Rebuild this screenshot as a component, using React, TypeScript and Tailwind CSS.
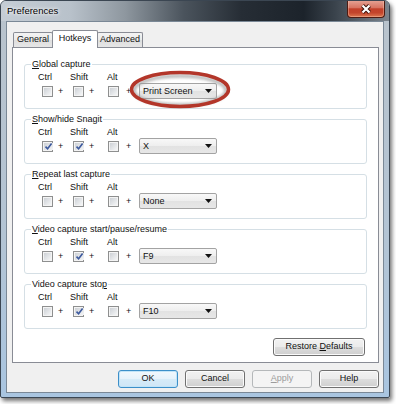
import React from 'react';

type Hotkey = {
  title: React.ReactNode;
  ctrl: boolean;
  shift: boolean;
  alt: boolean;
  key: string;
};

const hotkeys: Hotkey[] = [
  { title: <><u>G</u>lobal capture</>, ctrl: false, shift: false, alt: false, key: 'Print Screen' },
  { title: <><u>S</u>how/hide Snagit</>, ctrl: true, shift: true, alt: false, key: 'X' },
  { title: <><u>R</u>epeat last capture</>, ctrl: false, shift: false, alt: false, key: 'None' },
  { title: <><u>V</u>ideo capture start/pause/resume</>, ctrl: false, shift: true, alt: false, key: 'F9' },
  { title: <>Video capture sto<u>p</u></>, ctrl: false, shift: true, alt: false, key: 'F10' },
];

function Check({ checked }: { checked: boolean }) {
  return (
    <span className="flex w-[11px] h-[11px] shrink-0 border border-[#8e8f8f] bg-[#f4f4f4] p-[1px]">
      <span className="flex-1 flex items-center justify-center bg-[linear-gradient(135deg,#cdd1d6,#f5f6f7)]">
        {checked && (
          <svg width="9" height="9" viewBox="0 0 9 9">
            <path d="M1.5 4.6 L3.6 6.8 L7.6 1.6" fill="none" stroke="#3d5a9e" strokeWidth="1.6" />
          </svg>
        )}
      </span>
    </span>
  );
}

function Combo({ value }: { value: string }) {
  return (
    <div className="flex items-center w-[78px] h-[16px] pl-[3px] pr-[4px] border border-[#a3a3a3] rounded-[2px] bg-[linear-gradient(#f8f8f8,#eeeeee_50%,#e2e2e2_51%,#e7e7e7)]">
      <span className="flex-1 leading-[11px]">{value}</span>
      <svg width="7" height="4" viewBox="0 0 7 4">
        <path d="M0 0 H7 L3.5 4 Z" fill="#111" />
      </svg>
    </div>
  );
}

function Group({ item, highlight }: { item: Hotkey; highlight?: boolean }) {
  return (
    <div className="relative h-[45px] border border-[#d5dfe5] rounded-[3px]">
      <span className="absolute -top-[6px] left-[6px] bg-white px-[1px] leading-[11px]">{item.title}</span>
      <div className="flex pl-[13px] pt-[7px] leading-[11px]">
        <span className="w-[32px]">Ctrl</span>
        <span className="w-[37px]">Shift</span>
        <span>Alt</span>
      </div>
      <div className="flex items-center h-[16px] pl-[17px] leading-[11px]">
        <Check checked={item.ctrl} />
        <span className="ml-[5px] w-[15px]">+</span>
        <Check checked={item.shift} />
        <span className="ml-[5px] w-[19px]">+</span>
        <Check checked={item.alt} />
        <span className="ml-[7px] w-[13px]">+</span>
        <Combo value={item.key} />
      </div>
      {highlight && (
        <svg className="absolute left-[103px] top-[5px] pointer-events-none" width="104" height="40" viewBox="0 0 104 40">
          <defs>
            <filter id="blur" x="-10%" y="-30%" width="120%" height="160%">
              <feGaussianBlur stdDeviation="1.6" />
            </filter>
          </defs>
          <ellipse cx="52" cy="20.5" rx="46" ry="14.5" fill="none" stroke="#9a9a9a" strokeWidth="3" filter="url(#blur)" opacity="0.8" />
          <ellipse cx="52" cy="19.5" rx="48.5" ry="17" fill="none" stroke="#b3362a" strokeWidth="3.5" />
        </svg>
      )}
    </div>
  );
}

function Button({ children, kind = 'normal', width = 'w-[60px]' }: { children: React.ReactNode; kind?: 'normal' | 'default' | 'disabled'; width?: string }) {
  const look =
    kind === 'default'
      ? 'border-[#3c8fc9] bg-[linear-gradient(#f1f8fd,#e6f2fb_50%,#d6ebf8_51%,#cfe6f6)] shadow-[inset_0_0_0_1px_#c2e4f8]'
      : kind === 'disabled'
        ? 'border-[#b5b8ba] bg-[#f4f4f4] text-[#9c9c9c]'
        : 'border-[#707070] bg-[linear-gradient(#f2f2f2,#ebebeb_50%,#dddddd_51%,#cfcfcf)] shadow-[inset_0_0_0_1px_#fbfbfb]';
  return (
    <div className={`flex items-center justify-center h-[18px] ${width} border rounded-[3px] ${look}`}>
      {children}
    </div>
  );
}

export default function App() {
  return (
    <div className="w-[396px] h-[404px] bg-white font-['Liberation_Sans',Arial,sans-serif] text-[9px] text-[#111111]">
      <div className="flex flex-col w-[390px] h-[398px] border border-[#3b4652] rounded-t-[6px] rounded-b-[2px] overflow-hidden bg-[linear-gradient(180deg,#b9c3cc,#b3c4d4_60%,#a9c5e0)] shadow-[2px_3px_4px_rgba(0,0,0,0.55)]">
        {/* title bar */}
        <div className="flex items-start h-[20px] shrink-0 bg-[linear-gradient(90deg,#c5cdd5_0%,#b8c1ca_18%,#8e979f_32%,#4b545d_47%,#262d35_62%,#1c232b_78%,#3a434c_86%,#7c858e_100%)]">
          <span className="pl-[6px] pt-[4px] text-[9.5px] leading-[12px] text-black [text-shadow:0_0_5px_#ffffff,0_0_3px_#ffffff]">Preferences</span>
          <div className="ml-auto mr-[4px] -mt-[1px] flex items-center justify-center w-[38px] h-[18px] border border-[#4e1b12] border-t-0 rounded-b-[4px] bg-[linear-gradient(#e6a698,#d77462_45%,#c2402a_52%,#c3452c_75%,#dd7650)] shadow-[inset_0_0_0_1px_rgba(255,220,200,0.35)]">
            <svg width="12" height="10" viewBox="0 0 12 10">
              <path d="M2.5 1.5 L9.5 8.5 M9.5 1.5 L2.5 8.5" stroke="#3a1008" strokeWidth="4" />
              <path d="M2.5 1.5 L9.5 8.5 M9.5 1.5 L2.5 8.5" stroke="#ffffff" strokeWidth="2.2" />
            </svg>
          </div>
        </div>

        {/* client area */}
        <div className="mx-[5px] h-[372px] flex flex-col border border-[#7a8896] bg-[#f0f0f0] pl-[5px] pr-[4px]">
          <div className="flex items-end pt-[8px] pl-[1px]">
            <div className="flex items-center justify-center w-[40px] h-[15px] border border-b-0 border-[#898c95] rounded-t-[2px] bg-[linear-gradient(#f3f3f3,#ebebeb_50%,#dedede_51%,#e6e6e6)]">
              General
            </div>
            <div className="relative z-10 -ml-[1px] -mb-[1px] flex items-center justify-center w-[46px] h-[18px] pb-[2px] border border-b-0 border-[#898c95] rounded-t-[2px] bg-white">
              Hotkeys
            </div>
            <div className="-ml-[1px] flex items-center justify-center w-[46px] h-[15px] border border-b-0 border-[#898c95] rounded-t-[2px] bg-[linear-gradient(#f3f3f3,#ebebeb_50%,#dedede_51%,#e6e6e6)]">
              Advanced
            </div>
          </div>

          <div className="h-[316px] flex flex-col border border-[#898c95] bg-white px-[11px] pt-[16px]">
            <div className="flex flex-col gap-[10px]">
              {hotkeys.map((item, i) => (
                <Group key={i} item={item} highlight={i === 0} />
              ))}
            </div>
            <div className="flex justify-end mt-[9px] pr-[2px]">
              <Button width="w-[92px]">
                <span>Restore <u>D</u>efaults</span>
              </Button>
            </div>
          </div>

          <div className="flex justify-end gap-[7px] mt-[7px]">
            <Button kind="default">OK</Button>
            <Button>Cancel</Button>
            <Button kind="disabled">
              <span><u>A</u>pply</span>
            </Button>
            <Button>Help</Button>
          </div>
        </div>
      </div>
    </div>
  );
}
